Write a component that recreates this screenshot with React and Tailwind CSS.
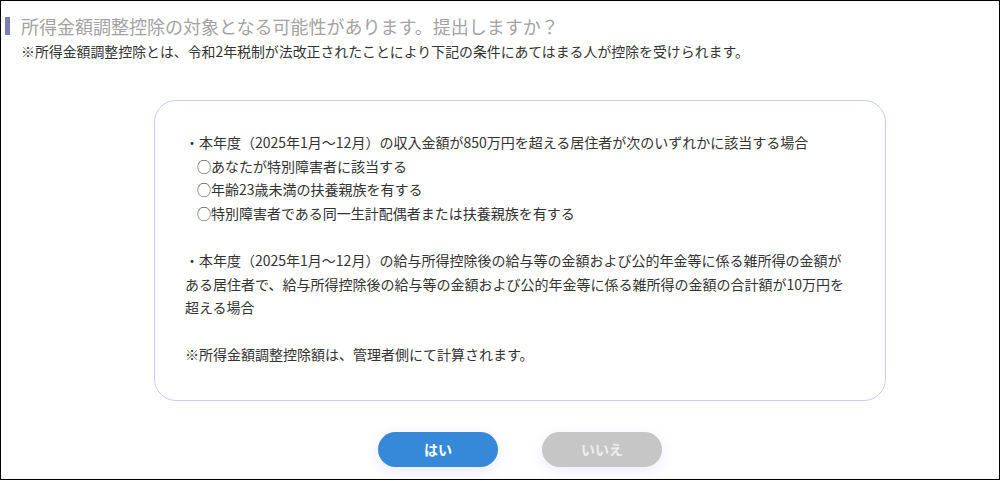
export default function App() {
  return (
    <div className="w-[1000px] h-[480px] border border-black bg-white overflow-hidden font-['Noto_Sans_CJK_JP',sans-serif]">
      <div className="pl-[4px] pt-[14px]">
        <div className="flex items-center gap-[11px]">
          <div className="w-[5px] h-[18px] bg-[#7a80b0]" />
          <h1 className="text-[18px] leading-[22px] text-[#a3a3a3] font-normal">
            所得金額調整控除の対象となる可能性があります。提出しますか？
          </h1>
        </div>
        <p className="pl-[16px] mt-[5px] text-[13.9px] leading-[18px] text-[#333]">
          ※所得金額調整控除とは、令和2年税制が法改正されたことにより下記の条件にあてはまる人が控除を受けられます。
        </p>
      </div>
      <div className="ml-[153px] mt-[40px] w-[732px] h-[301px] border border-[#c3d1f8] rounded-[22px] px-[30px] pt-[30px] text-[14px] leading-[23.6px] text-[#333]">
        <p>・本年度（2025年1月～12月）の収入金額が850万円を超える居住者が次のいずれかに該当する場合</p>
        <p className="pl-[12px]">◯あなたが特別障害者に該当する</p>
        <p className="pl-[12px]">◯年齢23歳未満の扶養親族を有する</p>
        <p className="pl-[12px]">◯特別障害者である同一生計配偶者または扶養親族を有する</p>
        <p className="mt-[23.6px]">
          ・本年度（2025年1月～12月）の給与所得控除後の給与等の金額および公的年金等に係る雑所得の金額が
          ある居住者で、給与所得控除後の給与等の金額および公的年金等に係る雑所得の金額の合計額が10万円を超える場合
        </p>
        <p className="mt-[23.6px]">※所得金額調整控除額は、管理者側にて計算されます。</p>
      </div>
      <div className="ml-[377px] mt-[31px] flex gap-[44px]">
        <button className="w-[120px] h-[35px] rounded-full bg-[#3589d8] text-white text-[14px] font-bold shadow-[0_4px_14px_rgba(110,90,240,0.15)]">
          はい
        </button>
        <button className="w-[120px] h-[35px] rounded-full bg-[#c6c6c6] text-[#ededed] text-[14px] font-bold shadow-[0_4px_14px_rgba(110,90,240,0.12)]">
          いいえ
        </button>
      </div>
    </div>
  );
}
